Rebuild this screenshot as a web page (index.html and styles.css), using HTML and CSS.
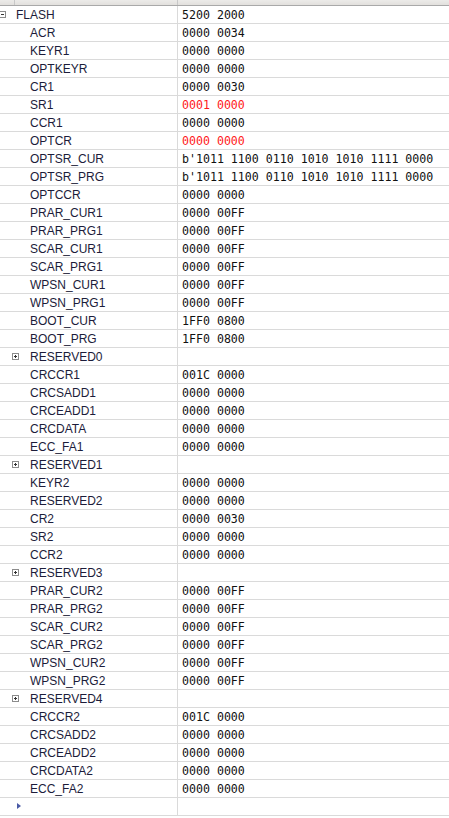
FILE: index.html
```html
<!DOCTYPE html>
<html>
<head>
<meta charset="utf-8">
<link rel="stylesheet" href="styles.css">
</head>
<body>
<div class="tree">
  <div class="header"><div class="hcell hfirst"></div><div class="hcell hname"></div><div class="hcell"></div></div>
  <div class="row"><div class="name root"><span class="box minus"></span>FLASH</div><div class="val">5200 2000</div></div>
  <div class="row"><div class="name">ACR</div><div class="val">0000 0034</div></div>
  <div class="row"><div class="name">KEYR1</div><div class="val">0000 0000</div></div>
  <div class="row"><div class="name">OPTKEYR</div><div class="val">0000 0000</div></div>
  <div class="row"><div class="name">CR1</div><div class="val">0000 0030</div></div>
  <div class="row"><div class="name">SR1</div><div class="val red">0001 0000</div></div>
  <div class="row"><div class="name">CCR1</div><div class="val">0000 0000</div></div>
  <div class="row"><div class="name">OPTCR</div><div class="val red">0000 0000</div></div>
  <div class="row"><div class="name">OPTSR_CUR</div><div class="val">b'1011 1100 0110 1010 1010 1111 0000</div></div>
  <div class="row"><div class="name">OPTSR_PRG</div><div class="val">b'1011 1100 0110 1010 1010 1111 0000</div></div>
  <div class="row"><div class="name">OPTCCR</div><div class="val">0000 0000</div></div>
  <div class="row"><div class="name">PRAR_CUR1</div><div class="val">0000 00FF</div></div>
  <div class="row"><div class="name">PRAR_PRG1</div><div class="val">0000 00FF</div></div>
  <div class="row"><div class="name">SCAR_CUR1</div><div class="val">0000 00FF</div></div>
  <div class="row"><div class="name">SCAR_PRG1</div><div class="val">0000 00FF</div></div>
  <div class="row"><div class="name">WPSN_CUR1</div><div class="val">0000 00FF</div></div>
  <div class="row"><div class="name">WPSN_PRG1</div><div class="val">0000 00FF</div></div>
  <div class="row"><div class="name">BOOT_CUR</div><div class="val">1FF0 0800</div></div>
  <div class="row"><div class="name">BOOT_PRG</div><div class="val">1FF0 0800</div></div>
  <div class="row"><div class="name"><span class="box plus"></span>RESERVED0</div><div class="val"></div></div>
  <div class="row"><div class="name">CRCCR1</div><div class="val">001C 0000</div></div>
  <div class="row"><div class="name">CRCSADD1</div><div class="val">0000 0000</div></div>
  <div class="row"><div class="name">CRCEADD1</div><div class="val">0000 0000</div></div>
  <div class="row"><div class="name">CRCDATA</div><div class="val">0000 0000</div></div>
  <div class="row"><div class="name">ECC_FA1</div><div class="val">0000 0000</div></div>
  <div class="row"><div class="name"><span class="box plus"></span>RESERVED1</div><div class="val"></div></div>
  <div class="row"><div class="name">KEYR2</div><div class="val">0000 0000</div></div>
  <div class="row"><div class="name">RESERVED2</div><div class="val">0000 0000</div></div>
  <div class="row"><div class="name">CR2</div><div class="val">0000 0030</div></div>
  <div class="row"><div class="name">SR2</div><div class="val">0000 0000</div></div>
  <div class="row"><div class="name">CCR2</div><div class="val">0000 0000</div></div>
  <div class="row"><div class="name"><span class="box plus"></span>RESERVED3</div><div class="val"></div></div>
  <div class="row"><div class="name">PRAR_CUR2</div><div class="val">0000 00FF</div></div>
  <div class="row"><div class="name">PRAR_PRG2</div><div class="val">0000 00FF</div></div>
  <div class="row"><div class="name">SCAR_CUR2</div><div class="val">0000 00FF</div></div>
  <div class="row"><div class="name">SCAR_PRG2</div><div class="val">0000 00FF</div></div>
  <div class="row"><div class="name">WPSN_CUR2</div><div class="val">0000 00FF</div></div>
  <div class="row"><div class="name">WPSN_PRG2</div><div class="val">0000 00FF</div></div>
  <div class="row"><div class="name"><span class="box plus"></span>RESERVED4</div><div class="val"></div></div>
  <div class="row"><div class="name">CRCCR2</div><div class="val">001C 0000</div></div>
  <div class="row"><div class="name">CRCSADD2</div><div class="val">0000 0000</div></div>
  <div class="row"><div class="name">CRCEADD2</div><div class="val">0000 0000</div></div>
  <div class="row"><div class="name">CRCDATA2</div><div class="val">0000 0000</div></div>
  <div class="row"><div class="name">ECC_FA2</div><div class="val">0000 0000</div></div>
  <div class="row"><div class="name newrow"><span class="arrow"></span></div><div class="val"></div></div>
</div>
</body>
</html>
```
FILE: styles.css
```css
html, body {
  margin: 0;
  padding: 0;
  background: #ffffff;
}
.tree {
  width: 449px;
  font-family: "Liberation Sans", Arial, sans-serif;
  font-size: 12px;
}
.header {
  display: grid;
  grid-template-columns: 15px 163px 1fr;
  height: 5px;
  background: linear-gradient(#ecebe9, #e2e0dd);
  border-bottom: 1px solid #a9a9a9;
}
.hcell {
  border-right: 1px solid #c8c8c8;
}
.hcell:last-child {
  border-right: none;
}
.row {
  display: grid;
  grid-template-columns: 178px 1fr;
  height: 17px;
  border-bottom: 1px solid #dadada;
}
.name {
  position: relative;
  box-sizing: border-box;
  border-right: 1px solid #dadada;
  padding-left: 30px;
  padding-top: 1px;
  line-height: 16px;
  color: #1c1c3a;
  white-space: nowrap;
}
.name.root {
  padding-left: 16px;
}
.val {
  padding-left: 4px;
  padding-top: 1px;
  font-family: "DejaVu Sans Mono", monospace;
  font-size: 11.6px;
  line-height: 16px;
  color: #111111;
  white-space: nowrap;
}
.val.red {
  color: #ff1a1a;
}
.box {
  position: absolute;
  top: 5px;
  width: 7px;
  height: 7px;
  box-sizing: border-box;
  border: 1px solid #8c8c8c;
  background: #ffffff;
}
.box.minus {
  left: -1px;
}
.box.plus {
  left: 12px;
}
.box::before {
  content: "";
  position: absolute;
  left: 1px;
  top: 2px;
  width: 3px;
  height: 1px;
  background: #333333;
}
.box.plus::after {
  content: "";
  position: absolute;
  left: 2px;
  top: 1px;
  width: 1px;
  height: 3px;
  background: #333333;
}
.arrow {
  position: absolute;
  left: 17px;
  top: 5px;
  width: 0;
  height: 0;
  border-top: 3.5px solid transparent;
  border-bottom: 3.5px solid transparent;
  border-left: 4px solid #4a5aa6;
}
```
